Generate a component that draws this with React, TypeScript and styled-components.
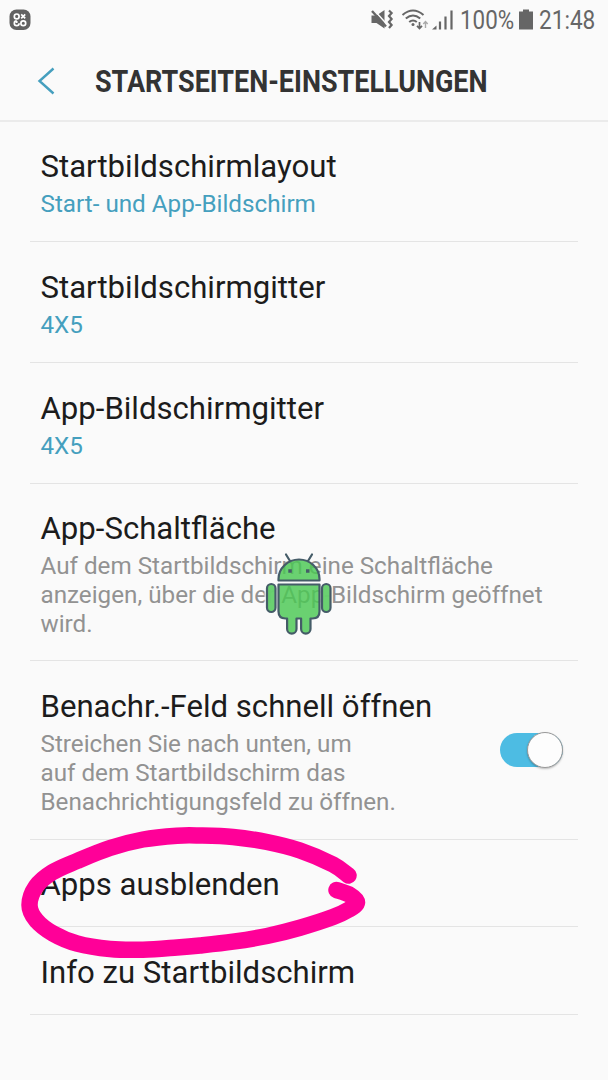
import React from "react";
import styled, { createGlobalStyle } from "styled-components";

const GlobalStyle = createGlobalStyle`
  *, *::before, *::after { box-sizing: border-box; }
  body { margin: 0; background: #fafafa; font-family: Roboto, "Liberation Sans", sans-serif; }
`;

const Screen = styled.div`
  position: relative;
  width: 608px;
  height: 1080px;
  overflow: hidden;
  background: #fafafa;
`;

const StatusBar = styled.div`
  display: flex;
  align-items: center;
  justify-content: space-between;
  height: 40px;
  padding: 0 12px 0 9px;
  color: #666;
`;

const StatusGroup = styled.div`
  display: flex;
  align-items: center;
`;

const StatusText = styled.span<{ $width: number; $scale: number }>`
  width: ${(p) => p.$width}px;
  font-size: 26px;
  line-height: 40px;
  white-space: nowrap;
  transform: scaleX(${(p) => p.$scale});
  transform-origin: left center;
`;

const Header = styled.header`
  display: flex;
  align-items: center;
  height: 82px;
  padding: 0 0 0 36px;
  border-bottom: 2px solid #ebebeb;
`;

const Title = styled.h1`
  margin: 4px 0 0 39px;
  color: #333;
  font-size: 31px;
  font-weight: 700;
  line-height: 40px;
  white-space: nowrap;
  transform: scaleX(0.87);
  transform-origin: left center;
`;

const List = styled.main`
  padding: 0 30px;
`;

const Row = styled.section<{ $height: number; $lead: number }>`
  display: flex;
  justify-content: space-between;
  height: ${(p) => p.$height}px;
  padding: ${(p) => p.$lead}px 15px 0 10.5px;
  border-bottom: 1px solid #e4e4e4;
`;

const RowTitle = styled.h2`
  margin: 0;
  color: #1c1c1c;
  font-size: 31.15px;
  font-weight: 400;
  line-height: 40px;
  white-space: nowrap;
`;

const RowNote = styled.p<{ $accent?: boolean }>`
  margin: 3.4px 0 0;
  color: ${(p) => (p.$accent ? "#459fbe" : "#929292")};
  font-size: 24.23px;
  line-height: 28.7px;
  white-space: nowrap;
`;

const Toggle = styled.div`
  display: flex;
  justify-content: flex-end;
  align-items: center;
  width: 63px;
  height: 34px;
  margin-top: 46px;
  border-radius: 17px;
  background: #4dbce3;
`;

const Knob = styled.div`
  width: 36px;
  height: 36px;
  flex: none;
  border: 1px solid #999;
  border-radius: 50%;
  background: #fdfdfd;
  box-shadow: 0 1px 2px rgba(0, 0, 0, 0.25);
`;

const Overlay = styled.svg`
  position: absolute;
  inset: 0;
  pointer-events: none;
`;

type Setting = {
  title: string;
  height: number;
  lead: number;
  lines?: string[];
  accent?: boolean;
  toggle?: boolean;
};

const settings: Setting[] = [
  { title: "Startbildschirmlayout", height: 120, lead: 25, lines: ["Start- und App-Bildschirm"], accent: true },
  { title: "Startbildschirmgitter", height: 121, lead: 26, lines: ["4X5"], accent: true },
  { title: "App-Bildschirmgitter", height: 121, lead: 25.5, lines: ["4X5"], accent: true },
  {
    title: "App-Schaltfläche",
    height: 177,
    lead: 25,
    lines: [
      "Auf dem Startbildschirm eine Schaltfläche",
      "anzeigen, über die der App-Bildschirm geöffnet",
      "wird.",
    ],
  },
  {
    title: "Benachr.-Feld schnell öffnen",
    height: 179,
    lead: 26,
    lines: ["Streichen Sie nach unten, um", "auf dem Startbildschirm das", "Benachrichtigungsfeld zu öffnen."],
    toggle: true,
  },
  { title: "Apps ausblenden", height: 87, lead: 25 },
  { title: "Info zu Startbildschirm", height: 88, lead: 26 },
];

const strokePoints: [number, number][] = [
  [348.5, 875.5], [333, 864.5], [300, 850.5], [267, 842], [233, 837], [200, 835.5], [177, 835.7], [143, 839.5],
  [110, 848], [77, 861], [52, 872.5], [36, 886.5], [29.5, 905], [36, 920], [53, 933.5],
  [77, 943.5], [110, 949], [143, 949.7], [177, 947.5], [200, 945.5], [233, 941.7], [267, 936],
  [300, 927.7], [333, 917], [349, 909.5], [357, 902.5], [350, 895], [336.5, 890],
];

/* Joins the points with a smooth Catmull-Rom curve. */
const smoothPath = (pts: [number, number][]) => {
  let d = `M${pts[0][0]} ${pts[0][1]}`;
  for (let i = 0; i < pts.length - 1; i++) {
    const a = pts[Math.max(i - 1, 0)];
    const b = pts[i];
    const c = pts[i + 1];
    const e = pts[Math.min(i + 2, pts.length - 1)];
    d += `C${b[0] + (c[0] - a[0]) / 6} ${b[1] + (c[1] - a[1]) / 6} ${c[0] - (e[0] - b[0]) / 6} ${c[1] - (e[1] - b[1]) / 6} ${c[0]} ${c[1]}`;
  }
  return d;
};

const AppBadge = () => (
  <svg width="22" height="22" viewBox="0 0 22 22" fill="none" stroke="#fff" strokeWidth="1.7">
    <rect x="0.5" y="0.5" width="21" height="20.5" rx="7" fill="#626262" stroke="none" />
    <circle cx="7.7" cy="7.4" r="2.4" />
    <path d="M12.2 5.4l4 4M16.2 5.4l-4 4" />
    <path d="M7.7 11.8a2.4 2.4 0 1 0 2.4 2.4M7.7 14V12" />
    <circle cx="14.3" cy="14.2" r="2.4" />
  </svg>
);

const StatusIcons = () => (
  <svg width="90" height="30" viewBox="370 5 90 30" fill="none" stroke="#666">
    <path d="M371.5 15.5h5l8-5.5v18.5l-8-5.5h-5z" fill="#666" stroke="none" />
    <path d="M373.5 9.5l14 15.5" stroke="#fafafa" strokeWidth="1.6" />
    <path d="M372 11l14 15.5" strokeWidth="2.4" />
    <path d="M389 10.5l2.6 2.5-2.6 3 2.6 3-2.6 3 2.6 3-2.6 3" strokeWidth="2.2" />
    <path d="M402.5 15q10.5-9 21 0M405.8 18.5q7.2-6 14.4 0M409.2 22q3.8-3 7.6 0" strokeWidth="2.1" />
    <circle cx="413" cy="24.6" r="1.5" fill="#666" stroke="none" />
    <path d="M419.5 22v6.5M417 25.8l2.5 2.7 2.5-2.7" strokeWidth="1.7" />
    <path d="M425.5 28v-6M423.3 24l2.2-2.5 2.2 2.5" stroke="#aaa" strokeWidth="1.4" />
    <path d="M432 29.5l4.5-4v4z" fill="#666" stroke="none" />
    <path d="M440 29.5v-8M445.5 29.5v-13M451.5 29.5v-19" strokeWidth="2.2" />
  </svg>
);

const Battery = () => (
  <svg width="22" height="24" viewBox="517 8 22 24">
    <path d="M519 11.5h4V9.5h6v2h4v18h-14z" fill="#666" />
  </svg>
);

const BackArrow = () => (
  <svg width="20" height="30" viewBox="36 66 20 30" fill="none" stroke="#459fbe" strokeWidth="2.4">
    <path d="M53.5 69.5L39.5 82l14 12.5" />
  </svg>
);

const Robot = () => (
  <g fill="#4bc853" fillOpacity="0.82" stroke="#455c68" strokeWidth="2.2" strokeLinejoin="round" strokeLinecap="round">
    <path d="M277 580h44v6h-44zM264.5 584h13.5v28h-13.5zM320 584h12v28h-12z" fill="#fafafa" stroke="none" />
    <path d="M286 554.5l4 6.5M312 554.5l-4 6.5" fill="none" />
    <path d="M278.5 580.5v-1.5a20.5 19.5 0 0 1 41 0v1.5z" />
    <path d="M278.5 584.5h41v27q0 7-7 7h-2v10.5a4.7 4.7 0 0 1-9.4 0v-10.5h-4.6v10.5a4.7 4.7 0 0 1-9.4 0v-10.5h-1.6q-7 0-7-7z" />
    <rect x="267" y="584" width="8.5" height="28" rx="4.25" />
    <rect x="322" y="584" width="8.5" height="28" rx="4.25" />
    <path d="M288.3 569.3h3.5v3.5h-3.5zM306 569.3h3.5v3.5h-3.5z" fill="#455c68" stroke="none" fillOpacity="1" />
  </g>
);

export default function App() {
  return (
    <Screen>
      <GlobalStyle />
      <StatusBar>
        <AppBadge />
        <StatusGroup>
          <StatusIcons />
          <StatusText $width={57} $scale={0.86}>100%</StatusText>
          <Battery />
          <StatusText $width={57} $scale={0.87}>21:48</StatusText>
        </StatusGroup>
      </StatusBar>
      <Header>
        <BackArrow />
        <Title>STARTSEITEN-EINSTELLUNGEN</Title>
      </Header>
      <List>
        {settings.map((s) => (
          <Row key={s.title} $height={s.height} $lead={s.lead}>
            <div>
              <RowTitle>{s.title}</RowTitle>
              {s.lines && (
                <RowNote $accent={s.accent}>
                  {s.lines.map((line, i) => (
                    <React.Fragment key={line}>
                      {i > 0 && <br />}
                      {line}
                    </React.Fragment>
                  ))}
                </RowNote>
              )}
            </div>
            {s.toggle && (
              <Toggle>
                <Knob />
              </Toggle>
            )}
          </Row>
        ))}
      </List>
      <Overlay width="608" height="1080" viewBox="0 0 608 1080">
        <Robot />
        <path
          d={smoothPath(strokePoints)}
          fill="none"
          stroke="#ff0098"
          strokeWidth="16.5"
          strokeLinecap="round"
          strokeLinejoin="round"
        />
      </Overlay>
    </Screen>
  );
}
